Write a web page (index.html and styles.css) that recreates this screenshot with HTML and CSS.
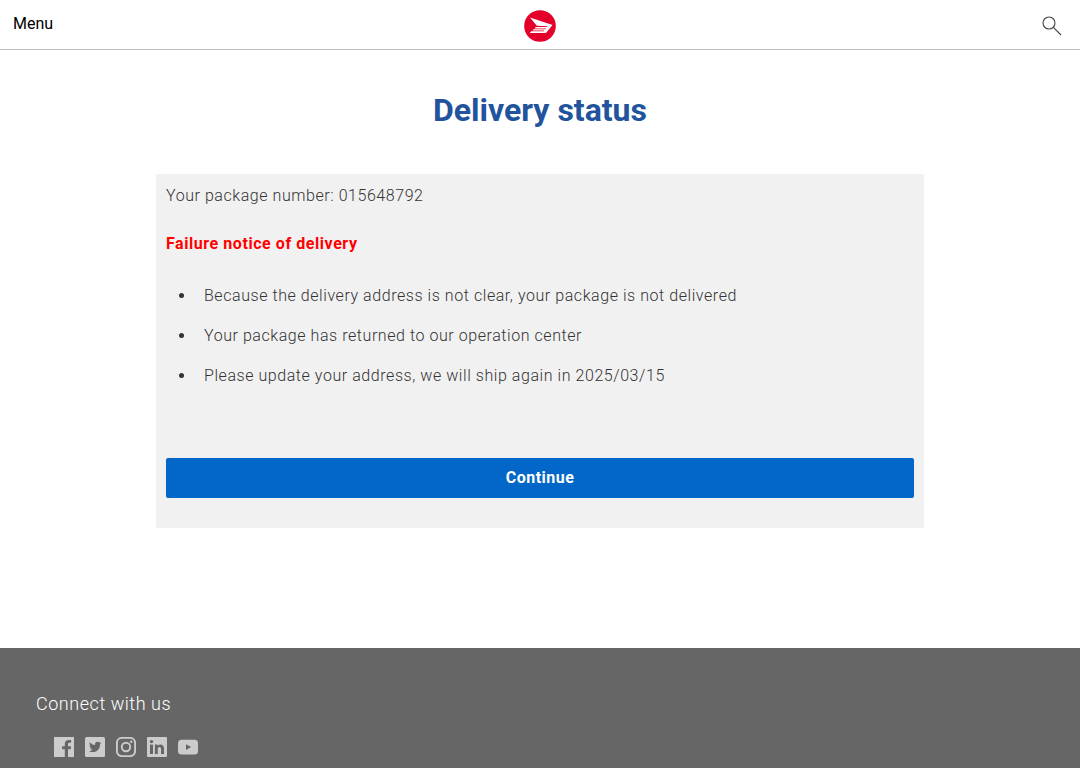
FILE: index.html
```html
<!DOCTYPE html>
<html lang="en">
<head>
<meta charset="utf-8">
<meta name="viewport" content="width=device-width, initial-scale=1">
<title>Delivery status</title>
<link rel="stylesheet" href="styles.css">
</head>
<body>
<header class="header">
	<button type="button" class="menu-btn">Menu</button>
	<a class="logo" href="#" aria-label="Home">
		<svg width="32" height="32" viewBox="0 0 32 32">
			<circle cx="16" cy="16" r="15.8" fill="#e4002b"/>
			<path fill="#fff" d="M6 7.5L28.5 15L22 23H5.8L7.2 21.3H19.8L20.3 20.6H8.4L9.6 19.2H21.4L22 18.5H10.5L11.8 17H23L23.6 16.3L12.8 15.8Z"/>
		</svg>
	</a>
	<button type="button" class="search-btn" aria-label="Search">
		<svg width="20" height="20" viewBox="0 0 20 20" fill="none" stroke="#444" stroke-width="1.1">
			<circle cx="7" cy="7" r="6"/>
			<path d="M11.4 11.4L19 19"/>
		</svg>
	</button>
</header>

<main class="main">
	<h1>Delivery status</h1>
	<div class="panel">
		<p>Your package number: 015648792</p>
		<p class="notice">Failure notice of delivery</p>
		<ul>
			<li>Because the delivery address is not clear, your package is not delivered</li>
			<li>Your package has returned to our operation center</li>
			<li>Please update your address, we will ship again in 2025/03/15</li>
		</ul>
		<button type="button" class="continue-btn">Continue</button>
	</div>
</main>

<footer class="footer">
	<h2>Connect with us</h2>
	<div class="social">
		<a href="#" aria-label="Facebook">
			<svg width="20" height="20" viewBox="0 0 20 20"><path fill="#ccc" d="M0 0H20V20H14V12.3H16.7L17.1 9.2H14V7.3C14 6.4 14.3 5.8 15.5 5.8H17.1V3.1C16.8 3 15.9 3 14.8 3C12.4 3 10.8 4.4 10.8 7V9.2H8.1V12.3H10.8V20H0Z"/></svg>
		</a>
		<a href="#" aria-label="Twitter">
			<svg width="20" height="20" viewBox="0 0 20 20"><rect width="20" height="20" rx="1.5" fill="#ccc"/><path fill="#666" d="M16.2 6C15.7 6.2 15.3 6.3 14.8 6.4C15.3 6.1 15.7 5.6 15.9 5C15.4 5.3 14.9 5.5 14.3 5.6C12.6 3.8 9.6 5.1 10.1 7.9C8 7.8 6.1 6.8 4.8 5.2C4.1 6.4 4.5 7.9 5.6 8.7C5.2 8.7 4.8 8.6 4.5 8.4C4.5 9.6 5.4 10.7 6.6 11C6.2 11.1 5.8 11.1 5.4 11C5.7 12.1 6.7 12.8 7.9 12.8C6.8 13.7 5.4 14.1 4 13.9C8.8 16.9 15.1 14 15 7.5C15.5 7.1 15.9 6.6 16.2 6Z"/></svg>
		</a>
		<a href="#" aria-label="Instagram">
			<svg width="20" height="20" viewBox="0 0 20 20" fill="none" stroke="#ccc" stroke-width="1.9"><rect x=".9" y=".9" width="18.2" height="18.2" rx="5"/><circle cx="10" cy="10" r="4.2"/><circle cx="15.3" cy="4.7" r="1.2" fill="#ccc" stroke="none"/></svg>
		</a>
		<a href="#" aria-label="LinkedIn">
			<svg width="20" height="20" viewBox="0 0 20 20"><rect width="20" height="20" rx="1" fill="#ccc"/><g fill="#666"><circle cx="4.5" cy="4.6" r="1.7"/><rect x="3" y="7.6" width="3" height="9.4"/><path d="M7.9 7.6H10.7V8.9C12.2 6.5 17 6.7 17 11.3V17H14.1V12C14.1 9.1 10.8 9.3 10.8 12V17H7.9Z"/></g></svg>
		</a>
		<a href="#" aria-label="YouTube">
			<svg width="20" height="20" viewBox="0 0 20 20"><rect y="2.8" width="20" height="14.6" rx="3.5" fill="#ccc"/><path fill="#666" d="M8 7.2L13.2 10.1L8 13Z"/></svg>
		</a>
	</div>
</footer>
</body>
</html>
```

FILE: styles.css
```css
* {
	box-sizing: border-box;
}
body {
	margin: 0;
	background: #fff;
	color: #333;
	font-family: Roboto, "Liberation Sans", sans-serif;
	font-size: 16px;
	font-weight: 300;
	line-height: 24px;
	letter-spacing: 0.035em;
}
button {
	font-family: inherit;
	font-size: 16px;
	border: 0;
	cursor: pointer;
}
svg {
	display: block;
}

/* header */
.header {
	display: grid;
	grid-template-columns: 1fr auto 1fr;
	align-items: center;
	height: 50px;
	padding: 0 18px;
	border-bottom: 1px solid #bbb;
}
.menu-btn {
	justify-self: start;
	margin-left: -5px;
	padding: 0 0 3px;
	background: none;
	color: #000;
	letter-spacing: normal;
}
.logo {
	padding-top: 2px;
}
.search-btn {
	justify-self: end;
	padding: 2px 0 0;
	background: none;
}

/* content */
.main {
	width: 80%;
	max-width: 768px;
	margin: 0 auto;
	padding: 40px 0 120px;
}
h1 {
	margin: 0 0 44px;
	color: #22549d;
	font-size: 32px;
	font-weight: bold;
	line-height: 40px;
	letter-spacing: normal;
	text-align: center;
}
.panel {
	padding: 10px 10px 30px;
	background: #f1f1f1;
}
.panel p {
	margin: 0 0 24px;
}
.panel .notice {
	color: #f00;
	font-weight: bold;
}
.panel ul {
	margin: 0 0 58px;
	padding-left: 30px;
}
.panel li {
	padding: 4px 0 12px 8px;
}
.continue-btn {
	display: block;
	width: 100%;
	height: 40px;
	padding: 0 0 2px;
	border-radius: 2px;
	background: #0267c8;
	color: #fff;
	font-weight: bold;
	letter-spacing: 0.03em;
}

/* footer */
.footer {
	padding: 44px 36px 11px;
	background: #666;
	color: #fff;
}
.footer h2 {
	margin: 0 0 21px;
	font-size: 18px;
	font-weight: 300;
	line-height: 24px;
	letter-spacing: 0.03em;
}
.social {
	display: flex;
	gap: 11px;
	padding-left: 18px;
}
```
